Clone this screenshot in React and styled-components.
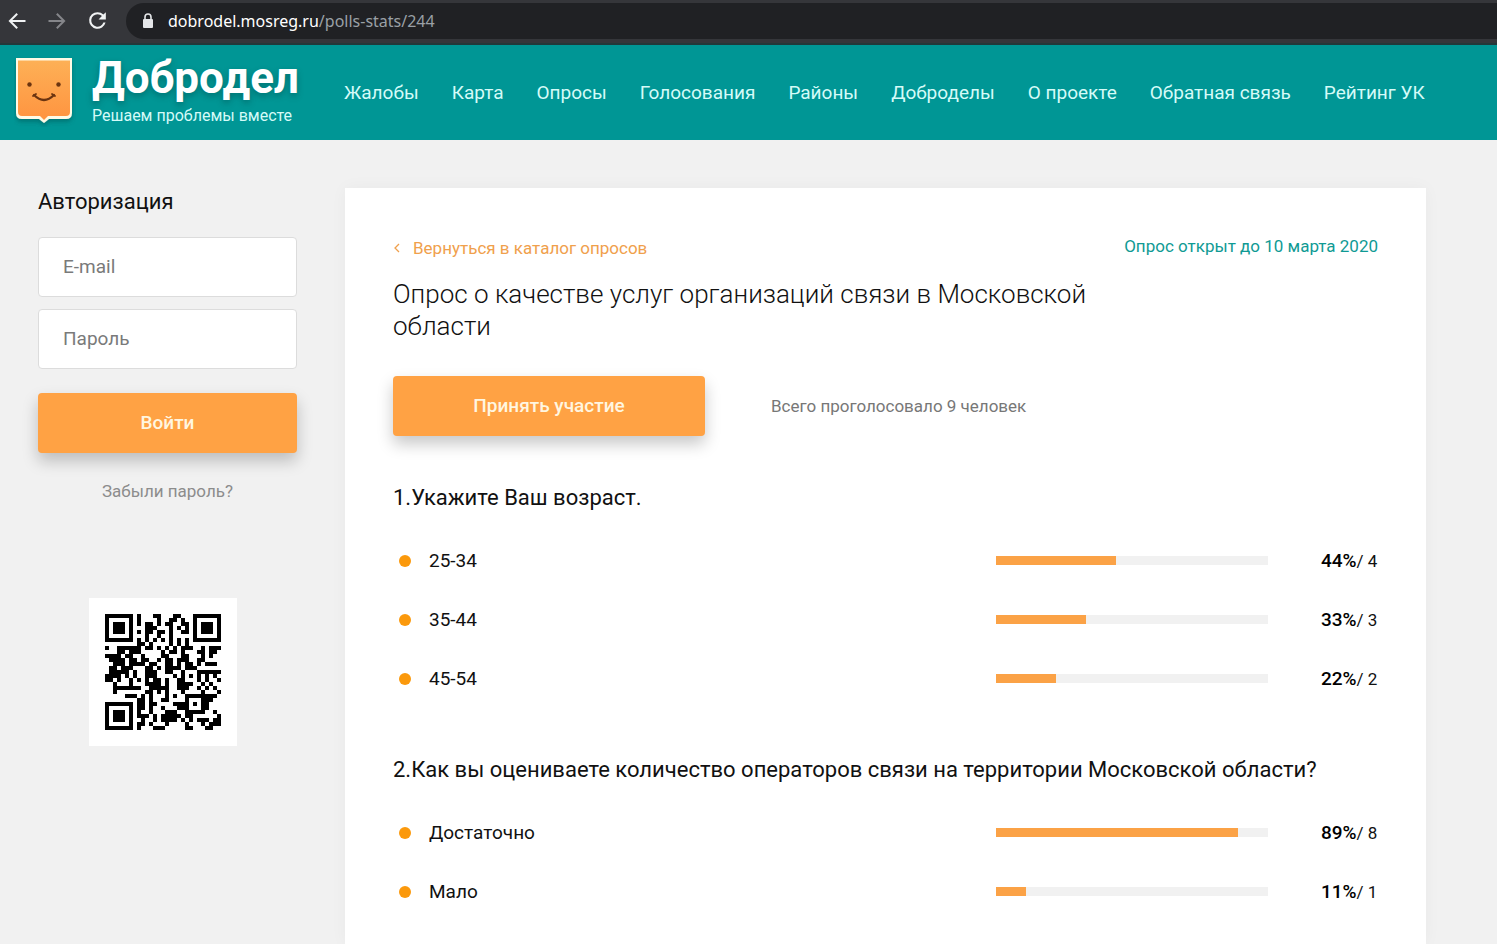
import React from 'react';
import styled, { createGlobalStyle } from 'styled-components';

const GlobalStyle = createGlobalStyle`
  * {
    box-sizing: border-box;
  }

  body {
    margin: 0;
    background: #f1f1f1;
    color: #111;
    font-family: Roboto, 'Liberation Sans', sans-serif;
  }

  button,
  input {
    font-family: inherit;
  }
`;

const Toolbar = styled.div`
  display: flex;
  align-items: center;
  height: 45px;
  padding: 0 0 2px 6px;
  background: #35363a;
  border-bottom: 2px solid #23383a;
`;

const ToolbarButton = styled.button`
  display: flex;
  align-items: center;
  justify-content: center;
  width: 40px;
  height: 36px;
  padding: 0 18px 0 0;
  border: 0;
  background: none;
  color: ${(props) => (props.$muted ? '#85868a' : '#f1f3f4')};

  svg {
    flex: none;
  }
`;

const Address = styled.div`
  display: flex;
  flex: 1;
  align-items: center;
  gap: 14px;
  height: 36px;
  padding-left: 16px;
  border-radius: 18px 0 0 18px;
  background: #202124;
  color: #9aa0a6;
  font-family: 'Noto Sans', 'Open Sans', sans-serif;
  font-size: 16px;

  span {
    color: #fff;
  }
`;

const Header = styled.header`
  display: flex;
  align-items: center;
  height: 95px;
  padding-left: 14px;
  background: #009695;
`;

const Brand = styled.a`
  display: flex;
  flex: none;
  width: 330px;
  gap: 16px;
  color: #fff;
  text-decoration: none;
`;

const BrandName = styled.strong`
  display: block;
  font-size: 44px;
  font-weight: 700;
  line-height: 42px;
  text-shadow: 0 3px 6px rgba(0, 60, 60, 0.4);
`;

const BrandSlogan = styled.span`
  display: block;
  margin-top: 5px;
  color: #d5fbf8;
  font-size: 16px;
  line-height: 24px;
`;

const Nav = styled.nav`
  display: flex;
  gap: 33px;
`;

const NavLink = styled.a`
  color: #d5fbf8;
  font-size: 19px;
  line-height: 24px;
  text-decoration: none;
  white-space: nowrap;
`;

const Page = styled.div`
  display: flex;
  align-items: flex-start;
  gap: 48px;
  padding: 48px 71px 0 38px;
`;

const Sidebar = styled.aside`
  flex: none;
  width: 259px;
`;

const LoginForm = styled.form`
  display: flex;
  flex-direction: column;
`;

const FormTitle = styled.h2`
  margin: 0 0 21px;
  font-size: 22px;
  font-weight: 400;
  line-height: 28px;
`;

const Field = styled.input`
  width: 100%;
  height: 60px;
  margin-bottom: 12px;
  padding: 0 24px 2px;
  border: 1px solid #dcdcdc;
  border-radius: 4px;
  background: #fff;
  font-size: 19px;

  &::placeholder {
    color: #7a7a7a;
  }
`;

const Button = styled.button`
  width: ${(props) => props.$width || '100%'};
  height: 60px;
  padding: 0 0 2px;
  border: 0;
  border-radius: 4px;
  background: #ffa244;
  box-shadow: 0 8px 16px rgba(0, 0, 0, 0.22);
  color: #fff6e0;
  font-size: 19px;
  font-weight: 500;
`;

const SubmitRow = styled.div`
  margin-top: 12px;
`;

const ForgotLink = styled.a`
  display: block;
  margin-top: 26px;
  color: #8c8c8c;
  font-size: 17px;
  line-height: 24px;
  text-align: center;
  text-decoration: none;
`;

const QrBox = styled.div`
  width: 148px;
  height: 148px;
  margin: 95px 0 0 51px;
  padding: 16px;
  background: #fff;

  svg {
    display: block;
  }
`;

const Card = styled.main`
  flex: 1;
  min-width: 0;
  padding: 48px 48px 23px;
  background: #fff;
  box-shadow: 0 0 16px rgba(0, 0, 0, 0.04);
`;

const CardTop = styled.div`
  display: flex;
  justify-content: space-between;
`;

const BackLink = styled.a`
  display: flex;
  align-items: center;
  gap: 12px;
  color: #f0a04c;
  font-size: 17px;
  line-height: 24px;
  text-decoration: none;
`;

const Deadline = styled.div`
  color: #109a94;
  font-size: 17px;
  line-height: 20px;
`;

const PollTitle = styled.h1`
  max-width: 740px;
  margin: 18px 0 34px;
  font-size: 26px;
  font-weight: 300;
  line-height: 32px;
`;

const Actions = styled.div`
  display: flex;
  align-items: center;
  gap: 66px;
`;

const Total = styled.div`
  color: #777;
  font-size: 17px;
`;

const QuestionBlock = styled.section`
  margin-top: 48px;
`;

const QuestionTitle = styled.h2`
  margin: 0 0 19px;
  font-size: 22px;
  font-weight: 400;
  line-height: 28px;
`;

const Options = styled.ul`
  margin: 0;
  padding: 0;
  list-style: none;
`;

const Option = styled.li`
  display: grid;
  grid-template-columns: 12px 1fr 272px 110px;
  align-items: center;
  height: 59px;
  padding-left: 6px;
`;

const Dot = styled.span`
  width: 12px;
  height: 12px;
  border-radius: 50%;
  background: #fb990c;
`;

const OptionName = styled.span`
  padding-left: 18px;
  font-size: 19px;
`;

const Track = styled.div`
  height: 9px;
  background: #f1f1f1;
`;

const Fill = styled.div`
  height: 100%;
  background: #fba246;
`;

const Votes = styled.span`
  padding-left: 53px;
  font-size: 17px;
  white-space: nowrap;

  strong {
    color: #000;
    font-size: 19px;
    font-weight: 500;
  }
`;

const links = [
  'Жалобы',
  'Карта',
  'Опросы',
  'Голосования',
  'Районы',
  'Доброделы',
  'О проекте',
  'Обратная связь',
  'Рейтинг УК',
];

const questions = [
  {
    title: '1.Укажите Ваш возраст.',
    options: [
      { name: '25-34', percent: 44, votes: 4 },
      { name: '35-44', percent: 33, votes: 3 },
      { name: '45-54', percent: 22, votes: 2 },
    ],
  },
  {
    title: '2.Как вы оцениваете количество операторов связи на территории Московской области?',
    options: [
      { name: 'Достаточно', percent: 89, votes: 8 },
      { name: 'Мало', percent: 11, votes: 1 },
    ],
  },
];

const qrRows = [
  '#######.#...##...##...#######',
  '#.....#.#....#..##.#..#.....#',
  '#.###.#.#.##.#.##..##.#.###.#',
  '#.###.#...###...#.#.#.#.###.#',
  '#.###.#.#.##.##.#..##.#.###.#',
  '#.....#...#..#..#.....#.....#',
  '#######.#.#.#.#.#.#.#.#######',
  '........##.#....#.#.#........',
  '#..######.##.#.#.#.###..#.###',
  '...##.###.....#.##.#...##.##.',
  '####.##..#....##...##...#.#..',
  '.####.##.##..#.##.###..##....',
  '..###.####.##..##.#.##.#.###.',
  '.##.###...##.#.####.###......',
  '.#####.#..###..##..#...######',
  '####.#.#..###....#.#.#.#.#.#.',
  '##.#..#.#.#.##.#..##...#.#..#',
  '..#...#...####.#..####..#.#..',
  '..#######..#####..###..#.#.#.',
  '..#.......##.#.#...#....#...#',
  '.....###.#.#...#.#..########.',
  '........##.#..##....#...###..',
  '#######.##.##....####.#.##...',
  '#.....#.##.#..#...###...##...',
  '#.###.#.#..#...###..#####..#.',
  '#.###.#.###.#.#####.##......#',
  '#.###.#..#..#.####.#.#.###.##',
  '#.....#.##.#...#....#...#.###',
  '#######.#...###.....##...##..',
];

const qrPath = qrRows
  .map((row, y) =>
    row
      .split('')
      .map((cell, x) => (cell === '#' ? `M${x} ${y}h1v1h-1z` : ''))
      .join('')
  )
  .join('');

const BackIcon = () => (
  <svg width="24" height="24" viewBox="0 0 24 24" fill="currentColor">
    <path d="M20.500 11H7.330l5.590-5.590L11.500 4l-8 8 8 8 1.410-1.410L7.330 13H20.500z" />
  </svg>
);

const ForwardIcon = () => (
  <svg width="24" height="24" viewBox="0 0 24 24" fill="currentColor">
    <path d="M12.500 4l-1.410 1.410L16.670 11H3.500v2h13.170l-5.580 5.590L12.500 20l8-8z" />
  </svg>
);

const ReloadIcon = () => (
  <svg width="25" height="25" viewBox="0 0 24 24" fill="currentColor">
    <path d="M17.65 6.35A7.95 7.95 0 0 0 12 4a8 8 0 1 0 7.73 10h-2.08A6 6 0 1 1 12 6c1.66 0 3.14.69 4.22 1.78L13 11h7V4z" />
  </svg>
);

const LockIcon = () => (
  <svg width="12" height="16" viewBox="0 0 12 16">
    <rect x="1" y="6" width="10" height="9" rx="1" fill="#e4e6e8" />
    <path d="M3 7V4a3 3 0 0 1 6 0v3" fill="none" stroke="#e4e6e8" strokeWidth="1.6" />
  </svg>
);

const LogoIcon = () => (
  <svg width="62" height="70" viewBox="0 0 62 70">
    <defs>
      <linearGradient id="logoFill" x1="0" y1="0" x2="0" y2="1">
        <stop offset="0" stopColor="#fdb056" />
        <stop offset="1" stopColor="#ff9440" />
      </linearGradient>
      <filter id="logoShadow" x="-20%" y="-20%" width="140%" height="150%">
        <feDropShadow dx="0" dy="3" stdDeviation="2" floodColor="#004d4d" floodOpacity="0.45" />
      </filter>
    </defs>
    <path
      d="M2 1H58V56Q58 62 52 62H35L30 66L25 62H8Q2 62 2 56Z"
      fill="#fffbe6"
      filter="url(#logoShadow)"
    />
    <path d="M4 3.500H56V55Q56 59 52 59H34L30 63L26 59H8Q4 59 4 55Z" fill="url(#logoFill)" />
    <circle cx="15.500" cy="27.500" r="2.200" fill="#6b3410" />
    <circle cx="44.500" cy="27.500" r="2.200" fill="#6b3410" />
    <path
      d="M20 38Q30 48 40 38"
      fill="none"
      stroke="#6b3410"
      strokeWidth="2.200"
      strokeLinecap="round"
    />
    <path d="M19 39l3 -2M41 39l-3 -2" stroke="#6b3410" strokeWidth="1.800" strokeLinecap="round" />
  </svg>
);

const Question = ({ title, options }) => (
  <QuestionBlock>
    <QuestionTitle>{title}</QuestionTitle>
    <Options>
      {options.map((option) => (
        <Option key={option.name}>
          <Dot />
          <OptionName>{option.name}</OptionName>
          <Track>
            <Fill style={{ width: `${option.percent}%` }} />
          </Track>
          <Votes>
            <strong>{option.percent}%</strong>/ {option.votes}
          </Votes>
        </Option>
      ))}
    </Options>
  </QuestionBlock>
);

const App = () => {
  return (
    <>
      <GlobalStyle />
      <Toolbar>
        <ToolbarButton aria-label="Назад">
          <BackIcon />
        </ToolbarButton>
        <ToolbarButton aria-label="Вперёд" $muted>
          <ForwardIcon />
        </ToolbarButton>
        <ToolbarButton aria-label="Обновить">
          <ReloadIcon />
        </ToolbarButton>
        <Address>
          <LockIcon />
          <div>
            <span>dobrodel.mosreg.ru</span>/polls-stats/244
          </div>
        </Address>
      </Toolbar>
      <Header>
        <Brand href="#">
          <LogoIcon />
          <div>
            <BrandName>Добродел</BrandName>
            <BrandSlogan>Решаем проблемы вместе</BrandSlogan>
          </div>
        </Brand>
        <Nav>
          {links.map((link) => (
            <NavLink key={link} href="#">
              {link}
            </NavLink>
          ))}
        </Nav>
      </Header>
      <Page>
        <Sidebar>
          <LoginForm>
            <FormTitle>Авторизация</FormTitle>
            <Field type="email" placeholder="E-mail" aria-label="E-mail" />
            <Field type="password" placeholder="Пароль" aria-label="Пароль" />
            <SubmitRow>
              <Button type="submit">Войти</Button>
            </SubmitRow>
          </LoginForm>
          <ForgotLink href="#">Забыли пароль?</ForgotLink>
          <QrBox>
            <svg width="116" height="116" viewBox="0 0 29 29" shapeRendering="crispEdges">
              <path d={qrPath} fill="#000" />
            </svg>
          </QrBox>
        </Sidebar>
        <Card>
          <CardTop>
            <BackLink href="#">
              <svg width="8" height="10" viewBox="0 0 8 10" fill="none" stroke="currentColor">
                <path d="M6 1L2 5l4 4" strokeWidth="1.300" />
              </svg>
              Вернуться в каталог опросов
            </BackLink>
            <Deadline>Опрос открыт до 10 марта 2020</Deadline>
          </CardTop>
          <PollTitle>Опрос о качестве услуг организаций связи в Московской области</PollTitle>
          <Actions>
            <Button type="button" $width="312px">
              Принять участие
            </Button>
            <Total>Всего проголосовало 9 человек</Total>
          </Actions>
          {questions.map((question) => (
            <Question key={question.title} {...question} />
          ))}
        </Card>
      </Page>
    </>
  );
};

export default App;
